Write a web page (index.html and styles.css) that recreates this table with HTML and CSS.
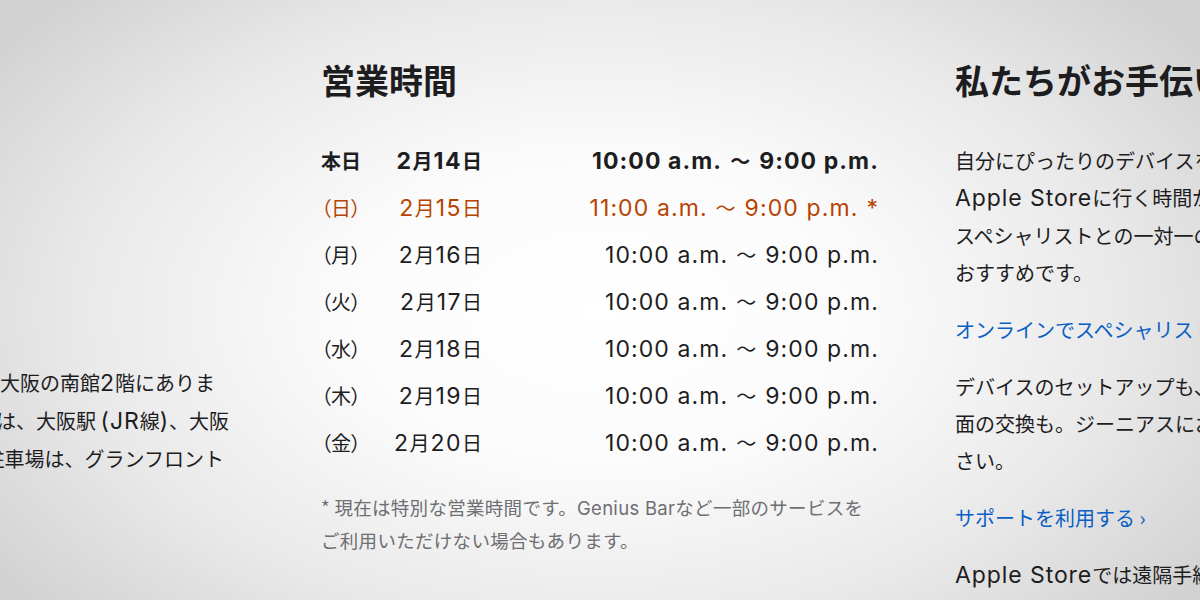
FILE: index.html
```html
<!DOCTYPE html>
<html lang="ja">
<head>
<meta charset="utf-8">
<title>営業時間</title>
<link rel="stylesheet" href="styles.css">
</head>
<body>
<div class="vignette">
  <div class="columns">
    <section class="col col-left">
      <p class="para left-para">
        <span class="line l1">グランフロント大阪の南館<span class="en">2</span>階にありま</span>
        <span class="line l2">す。最寄り駅は、大阪駅 <span class="en">(JR</span>線<span class="en">)</span>、大阪</span>
        <span class="line l3">梅田駅です。駐車場は、グランフロント</span>
      </p>
    </section>

    <section class="col col-mid">
      <h2 class="heading">営業時間</h2>
      <div class="hours">
        <div class="row today"><span class="day">本日</span><span class="date"><span class="en">2</span>月<span class="en">14</span>日</span><span class="time"><span class="en">10:00 a.m.</span><span class="wave">〜</span><span class="en">9:00 p.m.</span></span></div>
        <div class="row special"><span class="day">（日）</span><span class="date"><span class="en">2</span>月<span class="en">15</span>日</span><span class="time"><span class="en">11:00 a.m.</span><span class="wave">〜</span><span class="en">9:00 p.m.</span><span class="en star">*</span></span></div>
        <div class="row"><span class="day">（月）</span><span class="date"><span class="en">2</span>月<span class="en">16</span>日</span><span class="time"><span class="en">10:00 a.m.</span><span class="wave">〜</span><span class="en">9:00 p.m.</span></span></div>
        <div class="row"><span class="day">（火）</span><span class="date"><span class="en">2</span>月<span class="en">17</span>日</span><span class="time"><span class="en">10:00 a.m.</span><span class="wave">〜</span><span class="en">9:00 p.m.</span></span></div>
        <div class="row"><span class="day">（水）</span><span class="date"><span class="en">2</span>月<span class="en">18</span>日</span><span class="time"><span class="en">10:00 a.m.</span><span class="wave">〜</span><span class="en">9:00 p.m.</span></span></div>
        <div class="row"><span class="day">（木）</span><span class="date"><span class="en">2</span>月<span class="en">19</span>日</span><span class="time"><span class="en">10:00 a.m.</span><span class="wave">〜</span><span class="en">9:00 p.m.</span></span></div>
        <div class="row"><span class="day">（金）</span><span class="date"><span class="en">2</span>月<span class="en">20</span>日</span><span class="time"><span class="en">10:00 a.m.</span><span class="wave">〜</span><span class="en">9:00 p.m.</span></span></div>
      </div>
      <p class="note">* 現在は特別な営業時間です。<span class="en-note">Genius Bar</span>など一部のサービスを<br>ご利用いただけない場合もあります。</p>
    </section>

    <section class="col col-right">
      <h2 class="heading">私たちがお手伝いします</h2>
      <p class="para first">
        <span class="line">自分にぴったりのデバイスを見つけたい時に。</span>
        <span class="line"><span class="en">Apple Store</span>に行く時間がなくても、</span>
        <span class="line">スペシャリストとの一対一のオンラインセッションが</span>
        <span class="line">おすすめです。</span>
      </p>
      <a class="link" href="#">オンラインでスペシャリストに相談する ›</a>
      <p class="para">
        <span class="line">デバイスのセットアップも、バッテリーや画</span>
        <span class="line">面の交換も。ジーニアスにおまかせくだ</span>
        <span class="line">さい。</span>
      </p>
      <a class="link" href="#">サポートを利用する ›</a>
      <p class="para">
        <span class="line"><span class="en">Apple Store</span>では遠隔手続きによる修理サービスも</span>
        <span class="line">ご利用いただけます。直営店まで</span>
      </p>
    </section>
  </div>
</div>
</body>
</html>
```

FILE: styles.css
```css
* { box-sizing: border-box; }

html, body {
  margin: 0;
  padding: 0;
  width: 100%;
  height: 100%;
  overflow: hidden;
}

body {
  font-family: "Noto Sans CJK JP", Inter, sans-serif;
  color: #1d1d1f;
  -webkit-font-smoothing: antialiased;
}

.en {
  font-family: Inter, "Noto Sans CJK JP", sans-serif;
  font-size: 1.15em;
  letter-spacing: 0.04em;
}

.en-note {
  font-family: Inter, "Noto Sans CJK JP", sans-serif;
  font-size: 1em;
}

.vignette {
  width: 100%;
  height: 100%;
  overflow: hidden;
  background: radial-gradient(ellipse 62% 75% at 50% 52%, #ffffff 0%, #fbfbfb 35%, #e9e9e9 70%, #d2d2d2 100%);
}

.columns {
  display: grid;
  grid-template-columns: repeat(3, 558px);
  column-gap: 76px;
  width: 1826px;
  margin-left: calc(50% - 913px);
  padding-top: 59px;
}

.heading {
  margin: 0;
  font-size: 34px;
  line-height: 42px;
  font-weight: 700;
}

.para {
  margin: 0 0 20px;
  font-size: 20px;
  line-height: 37px;
}

.line {
  display: block;
  white-space: nowrap;
}

/* left column: lines end at their own points inside the column */
.col-left {
  padding-top: 305px;
}

.left-para {
  text-align: right;
}

.l1 { padding-right: 30px; }
.l2 { padding-right: 16px; }
.l3 { padding-right: 21px; }

.hours {
  margin-top: 36px;
  display: flex;
  flex-direction: column;
}

.row {
  display: grid;
  grid-template-columns: 60px 102px 1fr;
  height: 47px;
  align-items: center;
  font-size: 20px;
  line-height: 30px;
  white-space: nowrap;
}

.day {
  font-feature-settings: "palt";
}

.date {
  text-align: right;
  letter-spacing: 1px;
}

.date .en { letter-spacing: 1.5px; }

.time {
  text-align: right;
}

.time .en { letter-spacing: 1.1px; }

.wave {
  display: inline-block;
  margin: 0 9px 0 8px;
  font-size: 20px;
}

.star {
  margin-left: 8px;
}

.today { font-weight: 700; }

.special { color: #b64400; }

.note {
  margin: 25px 0 0;
  font-size: 18.5px;
  line-height: 32px;
  letter-spacing: 0.3px;
  color: #6e6e73;
}

.col-right .para.first {
  margin-top: 41px;
}

.link {
  display: block;
  margin: 0 0 20px;
  font-size: 20px;
  line-height: 37px;
  color: #0a5fc4;
  text-decoration: none;
  white-space: nowrap;
}
```
